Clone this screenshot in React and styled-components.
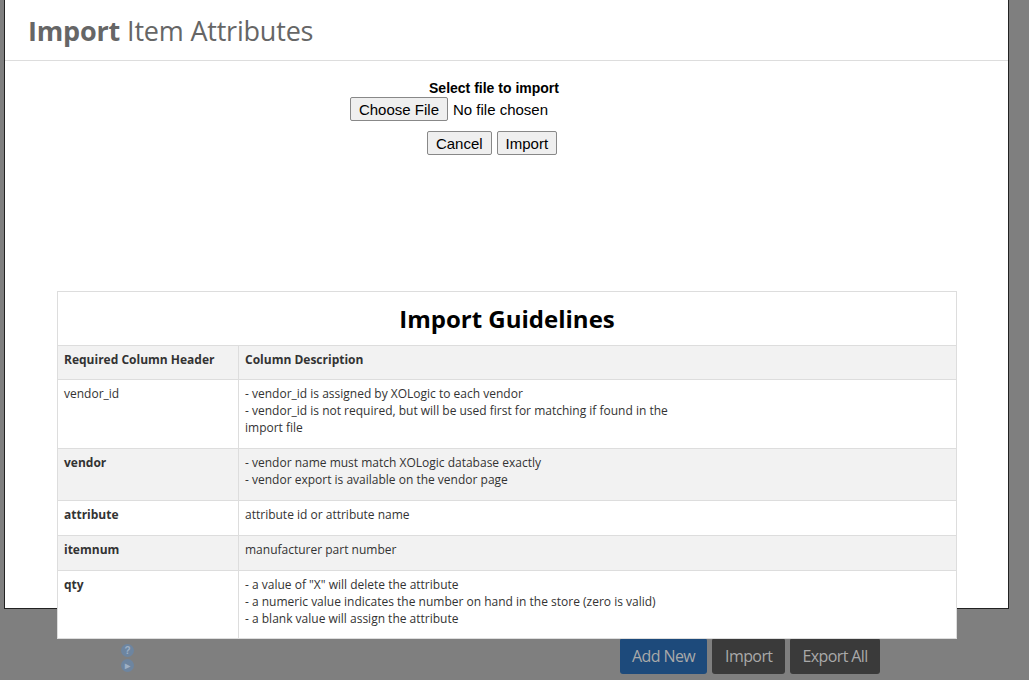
import React from "react";
import styled, { createGlobalStyle } from "styled-components";

const G = createGlobalStyle`
  html,body{margin:0;padding:0;}
  body{background:#7f7f7f;width:1029px;height:680px;overflow:hidden;font-family:"Open Sans",sans-serif;}
`;
const Page = styled.div`position:relative;width:1029px;height:680px;`;
const Footer = styled.div`
  position:absolute;left:0;right:0;top:638px;height:42px;display:flex;align-items:flex-start;
`;
const Help = styled.div`display:flex;flex-direction:column;gap:2px;margin-left:121px;margin-top:6px;`;
const Dot = styled.div`width:13px;height:13px;border-radius:50%;background:#6d85a0;color:#9fb0c4;font:bold 10px "Liberation Sans",sans-serif;display:flex;align-items:center;justify-content:center;`;
const Btns = styled.div`display:flex;gap:5px;margin-left:486px;`;
const FBtn = styled.div`
  height:36px;padding:0 ${p=>p.$p}px;display:flex;align-items:center;border-radius:3px;
  background:${p=>p.$blue?"#1d4a7b":"#3a3a3a"};color:#a9a9a9;font-size:16px;font-family:"Open Sans",sans-serif;letter-spacing:-0.6px;
`;
const Modal = styled.div`
  position:absolute;left:4px;top:-1px;width:1003px;height:608px;background:#fff;border:1px solid #222;
`;
const Title = styled.div`
  height:60px;border-bottom:1px solid #ddd;display:flex;align-items:center;padding-left:23px;
  font-size:27px;color:#666;font-family:"Open Sans",sans-serif;letter-spacing:-0.2px;
  b{font-weight:700;margin-right:7px;}
`;
const Form = styled.div`
  display:flex;flex-direction:column;align-items:center;font-family:"Liberation Sans",Arial,sans-serif;padding-top:19px;
`;
const Label = styled.div`font-weight:bold;font-size:14px;color:#000;margin-left:-25px;`;
const FileRow = styled.div`display:flex;align-items:center;gap:5px;font-size:15px;margin-left:-115px;margin-top:1px;`;
const NBtn = styled.button`
  font:15px "Liberation Sans",Arial,sans-serif;color:#000;background:#efefef;border:1px solid #888;border-radius:2px;padding:1px 8px;height:24px;
`;
const BtnRow = styled.div`display:flex;gap:5px;margin-top:10px;margin-left:-29px;`;
const Table = styled.table`
  position:absolute;left:52px;top:291px;width:900px;border-collapse:collapse;background:#fff;
  font-family:"Open Sans",sans-serif;font-size:12px;color:#333;border:1px solid #ddd;
  td,th{border:1px solid #ddd;text-align:left;vertical-align:top;padding:5px 6px 0;line-height:17px;}
`;
const Cap = styled.th`&&{text-align:center;font-size:24px;font-weight:700;color:#000;height:54px;box-sizing:border-box;vertical-align:middle;padding:0;}`;
const Row = styled.tr`background:${p=>p.$g?"#f2f2f2":"#fff"};td,th{height:${p=>p.$h}px;box-sizing:border-box;}`;
const C1 = styled.td`width:181px;font-weight:${p=>p.$b?700:400};`;

const rows=[
  ["vendor_id",false,false,69,["- vendor_id is assigned by XOLogic to each vendor","- vendor_id is not required, but will be used first for matching if found in the","import file"]],
  ["vendor",true,true,52,["- vendor name must match XOLogic database exactly","- vendor export is available on the vendor page"]],
  ["attribute",true,false,35,["attribute id or attribute name"]],
  ["itemnum",true,true,35,["manufacturer part number"]],
  ["qty",true,false,68,['- a value of "X" will delete the attribute',"- a numeric value indicates the number on hand in the store (zero is valid)","- a blank value will assign the attribute"]],
];

export default function App(){
  return <Page><G/>
    <Footer>
      <Help><Dot>?</Dot><Dot>▸</Dot></Help>
      <Btns><FBtn $blue $p={12}>Add New</FBtn><FBtn $p={13}>Import</FBtn><FBtn $p={12}>Export All</FBtn></Btns>
    </Footer>
    <Modal>
      <Title><b>Import</b> Item Attributes</Title>
      <Form>
        <Label>Select file to import</Label>
        <FileRow><NBtn>Choose File</NBtn>No file chosen</FileRow>
        <BtnRow><NBtn>Cancel</NBtn><NBtn>Import</NBtn></BtnRow>
      </Form>
      <Table>
        <tbody>
          <tr><Cap colSpan={2}>Import Guidelines</Cap></tr>
          <Row $g $h={34}><th style={{width:181}}>Required Column Header</th><th>Column Description</th></Row>
          {rows.map(([k,b,g,h,lines])=>(
            <Row key={k} $g={g} $h={h}><C1 $b={b}>{k}</C1><td>{lines.map((l,i)=><div key={i}>{l}</div>)}</td></Row>
          ))}
        </tbody>
      </Table>
    </Modal>
  </Page>;
}
